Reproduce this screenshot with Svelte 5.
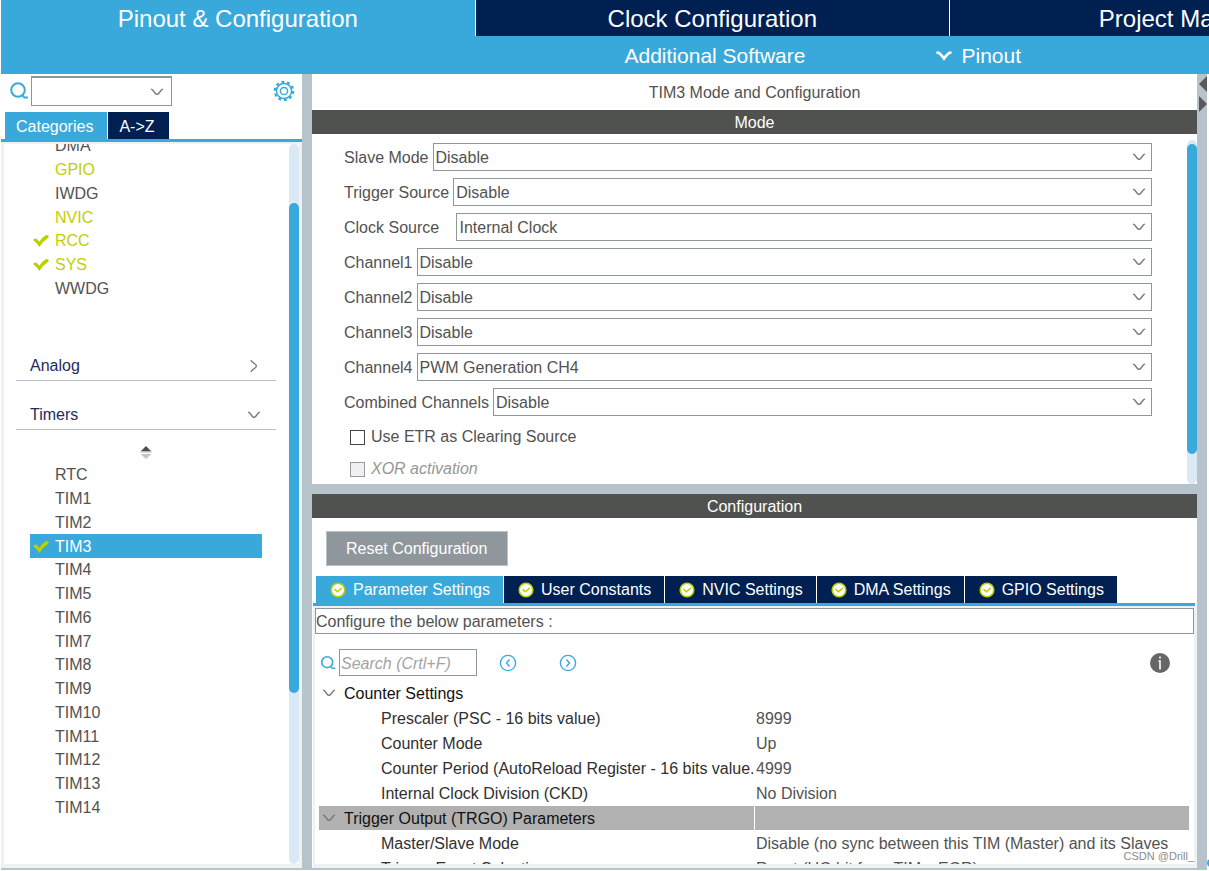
<script lang="ts">
    type Peripheral = { name: string; color?: 'green'; checked?: boolean };

    const mainTabs = ['Pinout & Configuration', 'Clock Configuration', 'Project Manager'];

    const systemCore: Peripheral[] = [
        { name: 'DMA' },
        { name: 'GPIO', color: 'green' },
        { name: 'IWDG' },
        { name: 'NVIC', color: 'green' },
        { name: 'RCC', color: 'green', checked: true },
        { name: 'SYS', color: 'green', checked: true },
        { name: 'WWDG' }
    ];

    const timers: Peripheral[] = [
        { name: 'RTC' },
        ...Array.from({ length: 14 }, (_, i) => ({ name: `TIM${i + 1}`, checked: i === 2 }))
    ];

    const modes = [
        { label: 'Slave Mode', value: 'Disable' },
        { label: 'Trigger Source', value: 'Disable' },
        { label: 'Clock Source   ', value: 'Internal Clock' },
        { label: 'Channel1', value: 'Disable' },
        { label: 'Channel2', value: 'Disable' },
        { label: 'Channel3', value: 'Disable' },
        { label: 'Channel4', value: 'PWM Generation CH4' },
        { label: 'Combined Channels', value: 'Disable' }
    ];

    const configTabs = [
        'Parameter Settings',
        'User Constants',
        'NVIC Settings',
        'DMA Settings',
        'GPIO Settings'
    ];

    const groups = [
        {
            name: 'Counter Settings',
            params: [
                ['Prescaler (PSC - 16 bits value)', '8999'],
                ['Counter Mode', 'Up'],
                ['Counter Period (AutoReload Register - 16 bits value.', '4999'],
                ['Internal Clock Division (CKD)', 'No Division']
            ]
        },
        {
            name: 'Trigger Output (TRGO) Parameters',
            params: [
                ['Master/Slave Mode', 'Disable (no sync between this TIM (Master) and its Slaves'],
                ['Trigger Event Selection', 'Reset (UG bit from TIMx_EGR)']
            ]
        }
    ];

    let mainTab = $state('Pinout & Configuration');
    let listTab = $state('Categories');
    let selected = $state('TIM3');
    let configTab = $state('Parameter Settings');
    let selectedGroup = $state('Trigger Output (TRGO) Parameters');
</script>

{#snippet chevron()}
    <svg class="chevron" viewBox="0 0 14 8" aria-hidden="true">
        <path d="M1 1 L2.5 1.8 L5 5 Q7 7.8 9 5 L11.5 1.8 L13 1" />
    </svg>
{/snippet}

{#snippet magnifier()}
    <svg class="magnifier" viewBox="0 0 20 20" aria-hidden="true">
        <circle cx="9" cy="9" r="6.8" />
        <path d="M13 14 L15.5 16.5 H19" />
    </svg>
{/snippet}

{#snippet peripherals(items: Peripheral[])}
    <ul class="peripherals">
        {#each items as item}
            <li class:selected={selected === item.name}>
                <button class:green={item.color === 'green'} onclick={() => (selected = item.name)}>
                    <span class="mark">
                        {#if item.checked}
                            <svg viewBox="0 0 16 14" aria-hidden="true">
                                <path d="M0.5 5 L3.5 4.5 L6.3 7.8 Q9 3.5 13 1 L15.5 1.5 V3.5 Q10 7 6.5 13 Q4 9 0.5 6.5 Z" />
                            </svg>
                        {/if}
                    </span>
                    {item.name}
                </button>
            </li>
        {/each}
    </ul>
{/snippet}

<div class="app">
    <header>
        <nav class="main-tabs">
            {#each mainTabs as tab}
                <button class:active={mainTab === tab} onclick={() => (mainTab = tab)}>{tab}</button>
            {/each}
        </nav>
        <div class="sub-bar">
            <button>Additional Software</button>
            <button>
                <svg viewBox="0 0 18 12" aria-hidden="true">
                    <path d="M1.5 2.5 L4 3 Q7 5.5 9 8.5 Q11 5.5 14 3 L16.5 2.5" />
                </svg>
                Pinout
            </button>
        </div>
    </header>

    <div class="workspace">
        <aside>
            <div class="search-row">
                {@render magnifier()}
                <div class="combo">
                    <input type="text" aria-label="Search peripheral" />
                    {@render chevron()}
                </div>
                <button class="gear" aria-label="Settings">
                    <svg viewBox="0 0 22 22" aria-hidden="true">
                        <circle class="teeth" cx="11" cy="11" r="9.2" />
                        <circle cx="11" cy="11" r="7.6" />
                        <circle cx="11" cy="11" r="3.6" />
                    </svg>
                </button>
            </div>
            <div class="list-tabs">
                {#each ['Categories', 'A->Z'] as tab}
                    <button class:active={listTab === tab} onclick={() => (listTab = tab)}>{tab}</button>
                {/each}
            </div>
            <div class="list-frame">
                <div class="list">
                    {@render peripherals(systemCore)}
                    <button class="category collapsed">Analog {@render chevron()}</button>
                    <button class="category">Timers {@render chevron()}</button>
                    <button class="sort" aria-label="Sort">
                        <svg viewBox="0 0 12 14" aria-hidden="true">
                            <path d="M6 0 L11 5 H1 Z" fill="#505050" />
                            <path d="M0.5 5 H11.5 V6.5 H0.5 Z" fill="#b8b8b8" />
                            <path d="M0.5 8 H11.5 L6 13 Z" fill="#c4c4c4" />
                        </svg>
                    </button>
                    {@render peripherals(timers)}
                </div>
                <div class="track"><div class="thumb side-thumb"></div></div>
            </div>
        </aside>

        <main>
            <section class="mode">
                <h1>TIM3 Mode and Configuration</h1>
                <h2>Mode</h2>
                <div class="mode-body">
                    <div class="mode-fields">
                        {#each modes as mode, i}
                            <div class="field">
                                <label for="mode-{i}">{mode.label}</label>
                                <div class="select">
                                    <select id="mode-{i}">
                                        <option>{mode.value}</option>
                                    </select>
                                    {@render chevron()}
                                </div>
                            </div>
                        {/each}
                        <label class="check"><input type="checkbox" /> Use ETR as Clearing Source</label>
                        <label class="check disabled"><input type="checkbox" disabled /> XOR activation</label>
                    </div>
                    <div class="track"><div class="thumb mode-thumb"></div></div>
                </div>
            </section>

            <section class="config">
                <h2>Configuration</h2>
                <button class="reset">Reset Configuration</button>
                <div class="config-tabs">
                    {#each configTabs as tab}
                        <button class:active={configTab === tab} onclick={() => (configTab = tab)}>
                            <svg viewBox="0 0 16 16" aria-hidden="true">
                                <circle cx="8" cy="8" r="6.8" />
                                <path d="M4.5 7.2 L7.4 9.8 L11.8 6" />
                            </svg>
                            {tab}
                        </button>
                    {/each}
                </div>
                <div class="config-body">
                    <p>Configure the below parameters :</p>
                    <div class="param-search">
                        {@render magnifier()}
                        <input type="text" placeholder="Search (Crtl+F)" aria-label="Search parameters" />
                        <button aria-label="Previous match">
                            <svg viewBox="0 0 18 18" aria-hidden="true">
                                <circle cx="9" cy="9" r="7.6" />
                                <path d="M10.5 5.5 L7.5 9 L10.5 12.5" />
                            </svg>
                        </button>
                        <button aria-label="Next match">
                            <svg viewBox="0 0 18 18" aria-hidden="true">
                                <circle cx="9" cy="9" r="7.6" />
                                <path d="M7.5 5.5 L10.5 9 L7.5 12.5" />
                            </svg>
                        </button>
                        <button class="info" aria-label="Information">
                            <svg viewBox="0 0 20 20" aria-hidden="true">
                                <circle cx="10" cy="10" r="10" fill="#666" />
                                <path d="M10 3.5 V5.5 M8.5 8 H10 V16.5" stroke="#fff" stroke-width="1.6" fill="none" />
                            </svg>
                        </button>
                    </div>
                    <table>
                        <tbody>
                            {#each groups as group}
                                <tr
                                    class="group"
                                    class:selected={selectedGroup === group.name}
                                    onclick={() => (selectedGroup = group.name)}
                                >
                                    <th>{@render chevron()}{group.name}</th>
                                    <td></td>
                                </tr>
                                {#each group.params as [name, value]}
                                    <tr>
                                        <th>{name}</th>
                                        <td>{value}</td>
                                    </tr>
                                {/each}
                            {/each}
                        </tbody>
                    </table>
                </div>
            </section>
        </main>

        <div class="splitter">
            <svg viewBox="0 0 10 40" aria-hidden="true">
                <path d="M2 10 L10 2 V18 Z M2 22 V38 L10 30 Z" />
            </svg>
        </div>
    </div>
    <span class="watermark">CSDN @Drill_</span>
    <span class="edge-dot"></span>
</div>

<style>
    :global(body) { margin: 0; background: #fff; }
    .app {
        --blue: #39a9dc;
        --navy: #002052;
        --edge: #b7c3ca;
        --pale: #f0f1f2;
        --line: #8e969d;
        --ink: #525252;
        position: relative;
        display: flex;
        flex-direction: column;
        box-sizing: border-box;
        height: 100vh;
        padding: 0 0 1px 1px;
        overflow: hidden;
        font: 16px/24px "Liberation Sans", Arial, sans-serif;
        color: var(--ink);
    }
    .app :global(*) { box-sizing: border-box; }
    button, input, select { margin: 0; padding: 0; font: inherit; color: inherit; background: none; border: 0; border-radius: 0; }
    button { cursor: pointer; white-space: nowrap; }
    svg { display: block; flex: none; }
    h1, h2, p, ul { margin: 0; padding: 0; font: inherit; }

    .main-tabs { display: grid; grid-template-columns: repeat(3, 39.2%); gap: 1px; overflow: hidden; }
    .main-tabs button { height: 36px; padding-top: 2px; font-size: 24px; color: #fff; background: var(--navy); }
    .main-tabs .active { background: var(--blue); }
    .sub-bar { display: flex; justify-content: flex-end; gap: 130px; height: 38px; padding: 2px 188px 0 0; background: var(--blue); }
    .sub-bar button { display: flex; align-items: center; gap: 8px; font-size: 21px; color: #fff; }
    .sub-bar svg { width: 18px; height: 12px; fill: none; stroke: #fff; stroke-width: 2.6; }

    .workspace { display: flex; flex: 1; min-height: 0; margin-right: 2px; border-bottom: 2px solid var(--edge); }
    .chevron { width: 14px; height: 8px; fill: none; stroke: #767676; stroke-width: 1.3; }
    .magnifier { width: 20px; height: 20px; fill: none; stroke: var(--blue); stroke-width: 2; }

    aside { display: flex; flex-direction: column; flex: none; width: 301px; }
    .search-row { display: flex; align-items: center; height: 34px; margin-bottom: 4px; padding: 0 7px 0 8px; }
    .combo { position: relative; width: 141px; height: 30px; margin-left: 2px; border: 1px solid var(--line); border-top-width: 2px; }
    .combo input { display: block; width: 100%; height: 100%; padding: 0 24px 0 4px; }
    .combo .chevron { position: absolute; right: 7px; top: 10px; }
    .gear { margin-left: auto; }
    .gear svg { width: 22px; height: 22px; fill: none; stroke: var(--blue); stroke-width: 1.5; }
    .gear .teeth { stroke-width: 2.2; stroke-dasharray: 2.89 2.89; }
    .list-tabs { display: flex; gap: 1px; padding-left: 4px; border-bottom: 3px solid var(--blue); }
    .list-tabs button { height: 27px; padding: 2px 14px 0 11px; color: #fff; background: var(--navy); }
    .list-tabs .active { background: var(--blue); }
    .list-frame { display: flex; flex: 1; min-height: 0; border: solid var(--pale); border-width: 2px 3px 4px; }
    .list { flex: 1; min-width: 0; overflow: hidden; padding: 0 13px 0 12px; }
    .peripherals { margin: 0 14px; list-style: none; }
    .peripherals:first-child { margin-top: -10px; margin-bottom: 52px; }
    li { height: 24px; }
    li:nth-child(4n + 1) { height: 23px; }
    li button { display: flex; align-items: center; width: 100%; height: 100%; padding-top: 1px; text-align: left; }
    li .mark { width: 22px; margin-left: 3px; }
    .mark svg { width: 16px; height: 14px; fill: #bccf00; }
    li .green { color: #c0d000; }
    li.selected { color: #fff; background: var(--blue); }
    .category { display: flex; justify-content: space-between; align-items: center; width: 100%; height: 29px; margin-bottom: 20px; padding: 0 15px 0 14px; color: #1e2b5c; border-bottom: 1px solid var(--edge); }
    .collapsed .chevron { transform: rotate(-90deg); }
    .sort { display: block; width: 100%; height: 14px; margin: -4px 0 3px; }
    .sort svg { width: 12px; height: 14px; margin: 0 auto; }
    .track { flex: none; width: 10px; background: #d9e9f6; border-radius: 5px; }
    .thumb { background: var(--blue); border-radius: 5px; }
    .side-thumb { height: 68%; margin-top: 59px; }
    .mode-thumb { height: 90%; margin-top: 4px; }

    main { display: flex; flex-direction: column; flex: 1; min-width: 0; border-left: 10px solid var(--edge); }
    h1 { height: 36px; line-height: 38px; text-align: center; }
    h2 { height: 24px; line-height: 26px; color: #fff; text-align: center; background: #50524f; }
    .mode { flex: none; border-bottom: 10px solid var(--edge); }
    .mode-body { display: flex; padding-top: 6px; }
    .mode-fields { display: flex; flex-direction: column; flex: 1; gap: 7px; padding: 3px 35px 4px 32px; }
    .field { display: flex; align-items: center; gap: 4px; height: 28px; }
    .field label { padding-top: 2px; white-space: pre; }
    .select { position: relative; flex: 1; height: 28px; }
    select { display: block; width: 100%; height: 100%; padding: 2px 24px 0 2px; appearance: none; border: 1px solid var(--line); }
    .select .chevron { position: absolute; right: 6px; top: 10px; pointer-events: none; }
    .check { display: flex; align-items: center; gap: 6px; height: 22px; margin: 3px 0 0 6px; }
    .check input { width: 15px; height: 15px; appearance: none; border: 1px solid #444; }
    .check input:checked { background: var(--blue); }
    .disabled { font-style: italic; color: #969696; }
    .disabled input { background: #eef0f3; border-color: #999; }

    .config { display: flex; flex-direction: column; align-items: stretch; flex: 1; min-height: 0; }
    .config h2 { flex: none; }
    .reset { flex: none; align-self: flex-start; height: 35px; margin: 13px 14px 10px; padding: 0 20px 0 19px; color: #fff; background: #8f979d; border: 1px solid #b7c3ca; }
    .config-tabs { display: flex; flex: none; gap: 1px; margin: 0 2px 0 1px; padding-left: 3px; border-bottom: 3px solid var(--blue); }
    .config-tabs button { display: flex; align-items: center; gap: 7px; height: 27px; padding: 0 13px 0 14px; color: #fff; background: var(--navy); }
    .config-tabs .active { background: var(--blue); }
    .config-tabs svg { width: 16px; height: 16px; fill: #fff; stroke: #bccf00; stroke-width: 1.6; }
    .config-tabs path { fill: none; }
    .config-body { flex: 1; min-height: 0; margin-left: 1px; overflow: hidden; border: solid var(--pale); border-width: 2px 3px 4px 2px; }
    p { height: 26px; line-height: 26px; border: 1px solid var(--line); }
    .param-search { display: flex; align-items: center; height: 27px; margin: 15px 24px 5px 5px; }
    .param-search .magnifier { width: 16px; height: 16px; margin-right: 3px; }
    .param-search input { width: 138px; height: 27px; margin-right: 22px; padding: 2px 0 0 1px; border: 1px solid var(--line); }
    .param-search input::placeholder { font-style: italic; color: #a3a3a3; opacity: 1; }
    .param-search button { margin-right: 42px; }
    .param-search button svg { width: 18px; height: 18px; fill: none; stroke: var(--blue); stroke-width: 1.4; }
    .param-search .info { margin: 0 0 0 auto; }
    .param-search .info svg { width: 20px; height: 20px; stroke: none; }
    table { width: calc(100% - 9px); margin-left: 4px; table-layout: fixed; border-spacing: 0; }
    th, td { height: 25px; padding: 2px 0 0; overflow: hidden; line-height: 22px; font-weight: normal; text-align: left; white-space: nowrap; border-bottom: 1px solid #fff; }
    th { width: 436px; padding-left: 62px; color: #303030; border-right: 1px solid #fff; }
    td { padding-left: 1px; }
    .group th { padding-left: 25px; color: #111; }
    .group .chevron { float: left; margin: 6px 0 0 -22px; }
    .group.selected { background: #b1b1b1; }

    .splitter { flex: none; width: 10px; background: var(--edge); }
    .splitter svg { width: 10px; height: 40px; fill: #595959; }
    .watermark { position: absolute; right: 15px; bottom: 7px; font-size: 11px; line-height: 16px; color: #8a8a8a; }
    .edge-dot { position: absolute; right: -6px; bottom: 4px; width: 8px; height: 8px; background: var(--blue); border-radius: 50%; }
</style>
